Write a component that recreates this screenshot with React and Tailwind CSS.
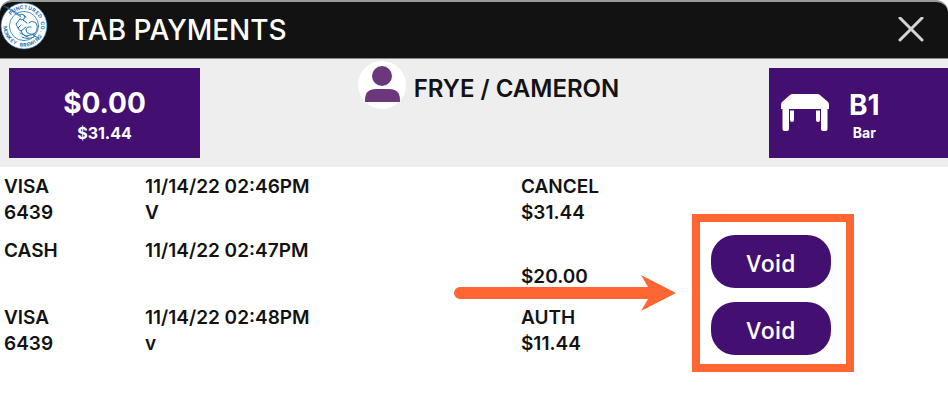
const payments = [
  { id: 1, type: "VISA", last4: "6439", date: "11/14/22 02:46PM", name: "V", status: "CANCEL", amount: "$31.44" },
  { id: 2, type: "CASH", last4: "", date: "11/14/22 02:47PM", name: "", status: "", amount: "$20.00", canVoid: true },
  { id: 3, type: "VISA", last4: "6439", date: "11/14/22 02:48PM", name: "v", status: "AUTH", amount: "$11.44", canVoid: true },
];

const logoTop = [..."PUNCTURED"];
const logoBottom = [..."MONKEY BREWING"];
const logoSide = [..."CO."];

const BreweryLogo = () => (
  <svg viewBox="0 0 48 48" className="w-12 h-12" fill="none" stroke="#1f75b5" strokeLinecap="round">
    <circle cx="24" cy="24" r="23" fill="#fff" strokeWidth="0.6" />
    <circle cx="24" cy="24" r="14.6" strokeWidth="0.8" />
    <g fill="#1f75b5" stroke="none" textAnchor="middle" className="font-['Inter',sans-serif] font-bold text-[5px]">
      {logoTop.map((ch, i) => (
        <text key={i} x="24" y="7" transform={`rotate(${-46 + i * 13} 24 24)`}>{ch}</text>
      ))}
      {logoBottom.map((ch, i) => (
        <text key={i} x="24" y="44.6" transform={`rotate(${82 - i * 10.6} 24 24)`}>{ch}</text>
      ))}
      {logoSide.map((ch, i) => (
        <text key={i} x="24" y="7" transform={`rotate(${82 + i * 13} 24 24)`}>{ch}</text>
      ))}
    </g>
    {/* monkey with spear */}
    <path d="M4 4 L21 15 M7 5 L20 13" strokeWidth="0.9" />
    <path d="M20 13 q2 -2 4 0 q2 2 0 4 q-2 2 -4 0 M24 14 l2 1 M20 17 l-4 5 l2 4 l3 -3 M23 18 l4 3" strokeWidth="1" />
    <path d="M29 21 q3 -3 7 0 q2 3 1 7 q-2 5 -7 4 q-4 -1 -4 -4 q1 -4 5 -3 M18 26 q0 2 3 3 l5 -4 M21 29 q2 5 7 6" strokeWidth="1" />
    <path d="M20 31 l6 3 l9 -2 M22 35 q6 3 12 0 M33 33 l5 3" strokeWidth="1" />
  </svg>
);

const TableIcon = () => (
  <svg viewBox="0 0 48 38" className="w-12 h-[38px]" fill="#fff">
    <path d="M9 1 Q10 0 12 0 H36 Q38 0 39 1 L47 8 Q48 9 48 11 V15 H46.5 V35 Q46.5 37 44.5 37 H42 Q40 37 40 35 V15 H8 V35 Q8 37 6 37 H3.5 Q1.5 37 1.5 35 V15 H0 V11 Q0 9 1 8 Z" />
    <path d="M9 16.5 H13 V26 Q13 28 11 28 Q9 28 9 26 Z M35 16.5 H39 V26 Q39 28 37 28 Q35 28 35 26 Z" />
  </svg>
);

const UserIcon = () => (
  <span className="w-12 h-12 rounded-full bg-white">
    <svg viewBox="0 0 48 48" className="w-12 h-12" fill="#6c377c">
      <circle cx="24" cy="15" r="10" />
      <path d="M7 41 V39 Q7 28 18 28 H31 Q42 28 42 39 V41 Z" />
    </svg>
  </span>
);

const App = () => {
  return (
    <div className="min-h-screen bg-white text-[#121212] font-['Inter',sans-serif]">
      <header className="flex items-center justify-between h-[59px] rounded-t-xl bg-[#121212] border-t-2 border-b border-t-[#999] border-b-[#888]">
        <div className="flex items-start gap-6">
          <BreweryLogo />
          <h1 className="pt-2 pb-2 text-[28px] leading-10 font-medium text-white">TAB PAYMENTS</h1>
        </div>
        <button aria-label="Close" className="mr-6">
          <svg viewBox="0 0 26 26" className="w-[26px] h-[26px]" stroke="#d4d4d4" strokeWidth="3" strokeLinecap="round">
            <path d="M2 1 L24 23 M24 1 L2 23" />
          </svg>
        </button>
      </header>

      <section className="flex items-start justify-between h-[108px] bg-[#eee] pl-[9px]">
        <button className="mt-[9px] w-[191px] h-[90px] pt-2 bg-[#430f70] text-white">
          <span className="block text-[28px] leading-8 font-bold">$0.00</span>
          <span className="block text-base leading-7 font-bold">$31.44</span>
        </button>
        <div className="flex items-center gap-2 pt-[2px] pl-2">
          <UserIcon />
          <h2 className="pt-2 text-2xl font-semibold">FRYE / CAMERON</h2>
        </div>
        <button className="mt-[9px] w-[179px] h-[90px] pl-3 flex items-center gap-5 bg-[#430f70] text-white">
          <TableIcon />
          <span className="pt-2">
            <span className="block text-[28px] leading-8 font-bold">B1</span>
            <span className="block text-sm leading-6 font-bold">Bar</span>
          </span>
        </button>
      </section>

      <main className="relative">
        <table className="w-full table-fixed text-left text-[19px] leading-[26px] font-semibold">
          <colgroup>
            <col className="w-[141px]" />
            <col className="w-[376px]" />
            <col className="w-[190px]" />
            <col />
          </colgroup>
          <tbody>
            {payments.map((p) => (
              <tr key={p.id} className={p.canVoid ? "h-[67px]" : "h-[61px]"}>
                <td className="pl-1 pt-1">
                  <div className="h-[26px]">{p.type}</div>
                  <div className="h-[26px]">{p.last4}</div>
                </td>
                <td className="pl-1 pt-1">
                  <div className="h-[26px]">{p.date}</div>
                  <div className="h-[26px]">{p.name}</div>
                </td>
                <td className="pl-1 pt-1">
                  <div className="h-[26px]">{p.status}</div>
                  <div className="h-[26px]">{p.amount}</div>
                </td>
                <td className="pl-1">
                  {p.canVoid && (
                    <button className="block w-[120px] h-[53px] pt-[2px] rounded-3xl bg-[#430f70] text-white text-[23px] font-semibold font-['Open_Sans',sans-serif]">
                      Void
                    </button>
                  )}
                </td>
              </tr>
            ))}
          </tbody>
        </table>

        {/* callout arrow and frame around the void buttons */}
        <svg viewBox="0 0 222 36" className="absolute left-[454px] top-[108px] w-[222px] h-9 pointer-events-none" fill="#ff6633">
          <path d="M6 12 H194 L187 0 L222 18 L187 36 L194 24 H6 A6 6 0 0 1 6 12 Z" />
        </svg>
        <div className="absolute left-[692px] top-[47px] w-[162px] h-[158px] border-8 border-[#ff6633] pointer-events-none" />
      </main>
    </div>
  );
};

export default App;
